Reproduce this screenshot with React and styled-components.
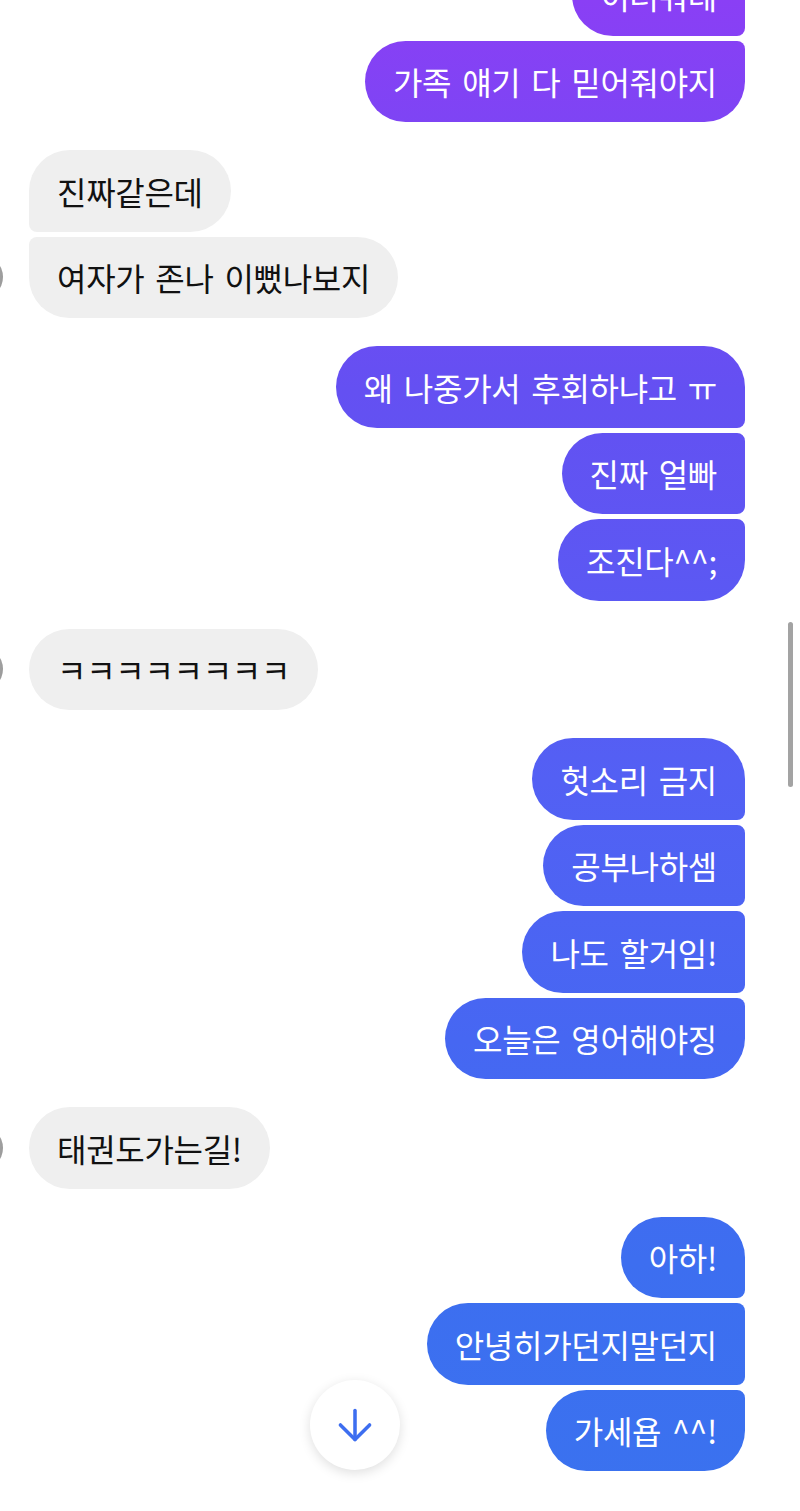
import React from 'react';
import styled, { createGlobalStyle, css } from 'styled-components';
import { ArrowDown } from 'lucide-react';

const GlobalStyle = createGlobalStyle`
  html, body {
    margin: 0;
    padding: 0;
    background: #ffffff;
  }
  body {
    font-family: "Noto Sans CJK KR", "Noto Sans", sans-serif;
  }
`;

const Screen = styled.div`
  position: relative;
  width: 800px;
  height: 1511px;
  overflow: hidden;
  background: #ffffff;
`;

const Thread = styled.div`
  display: flex;
  flex-direction: column;
  gap: 28px;
  margin-top: -46px;
`;

const OutGroup = styled.div`
  display: flex;
  flex-direction: column;
  align-items: flex-end;
  gap: 5px;
  padding-right: 55px;
`;

const InGroup = styled.div`
  display: flex;
  align-items: flex-end;
  gap: 26px;
`;

const InStack = styled.div`
  display: flex;
  flex-direction: column;
  align-items: flex-start;
  gap: 5px;
`;

const Avatar = styled.div`
  flex: none;
  width: 44px;
  height: 44px;
  margin-left: -41px;
  margin-bottom: 19px;
  border-radius: 50%;
  background: radial-gradient(circle at 30% 40%, #c9c9c9, #8d8d8d);
`;

const BIG = '41px';
const SMALL = '8px';

const radius = (side, pos) => {
  const top = pos === 'first' || pos === 'single' ? BIG : SMALL;
  const bottom = pos === 'last' || pos === 'single' ? BIG : SMALL;
  if (side === 'out') return `${BIG} ${top} ${bottom} ${BIG}`;
  return `${top} ${BIG} ${BIG} ${bottom}`;
};

const Bubble = styled.div`
  box-sizing: border-box;
  height: 81.5px;
  display: flex;
  align-items: center;
  padding: 0 28px;
  font-size: 32px;
  line-height: 1;
  letter-spacing: -0.3px;
  word-spacing: 4px;
  white-space: nowrap;
  border-radius: ${({ side, pos }) => radius(side, pos)};
  ${({ side }) =>
    side === 'out'
      ? css`
          color: #ffffff;
          background: linear-gradient(
            180deg,
            #8a3ff5 0px,
            #6450f2 390px,
            #5360f4 780px,
            #4667f2 1040px,
            #3d6ef0 1260px,
            #3a72ef 1511px
          );
          background-attachment: fixed;
        `
      : css`
          color: #111111;
          background: #efefef;
        `}
`;

const ScrollThumb = styled.div`
  position: absolute;
  right: 7px;
  top: 622px;
  width: 5px;
  height: 165px;
  border-radius: 3px;
  background: #a3a3a3;
`;

const JumpButton = styled.button`
  position: absolute;
  left: 310px;
  top: 1380px;
  width: 90px;
  height: 90px;
  border: none;
  border-radius: 50%;
  background: #ffffff;
  box-shadow: 0 3px 12px rgba(0, 0, 0, 0.13);
  display: flex;
  align-items: center;
  justify-content: center;
  color: #3d6ef0;
  padding: 0;
`;

const thread = [
  { side: 'out', msgs: ['이러줘데', '가족 얘기 다 믿어줘야지'] },
  { side: 'in', msgs: ['진짜같은데', '여자가 존나 이뻤나보지'] },
  { side: 'out', msgs: ['왜 나중가서 후회하냐고 ㅠ', '진짜 얼빠', '조진다^^;'] },
  { side: 'in', msgs: ['ㅋㅋㅋㅋㅋㅋㅋㅋ'] },
  { side: 'out', msgs: ['헛소리 금지', '공부나하셈', '나도 할거임!', '오늘은 영어해야징'] },
  { side: 'in', msgs: ['태권도가는길!'] },
  { side: 'out', msgs: ['아하!', '안녕히가던지말던지', '가세욥 ^^!'] },
];

const posOf = (i, n) => {
  if (n === 1) return 'single';
  if (i === 0) return 'first';
  if (i === n - 1) return 'last';
  return 'middle';
};

const Bubbles = ({ side, msgs }) =>
  msgs.map((m, i) => (
    <Bubble key={i} side={side} pos={posOf(i, msgs.length)}>
      {m}
    </Bubble>
  ));

export default function App() {
  return (
    <Screen>
      <GlobalStyle />
      <Thread>
        {thread.map((g, i) =>
          g.side === 'out' ? (
            <OutGroup key={i}>
              <Bubbles side="out" msgs={g.msgs} />
            </OutGroup>
          ) : (
            <InGroup key={i}>
              <Avatar />
              <InStack>
                <Bubbles side="in" msgs={g.msgs} />
              </InStack>
            </InGroup>
          )
        )}
      </Thread>
      <ScrollThumb />
      <JumpButton>
        <ArrowDown size={50} strokeWidth={1.7} />
      </JumpButton>
    </Screen>
  );
}
